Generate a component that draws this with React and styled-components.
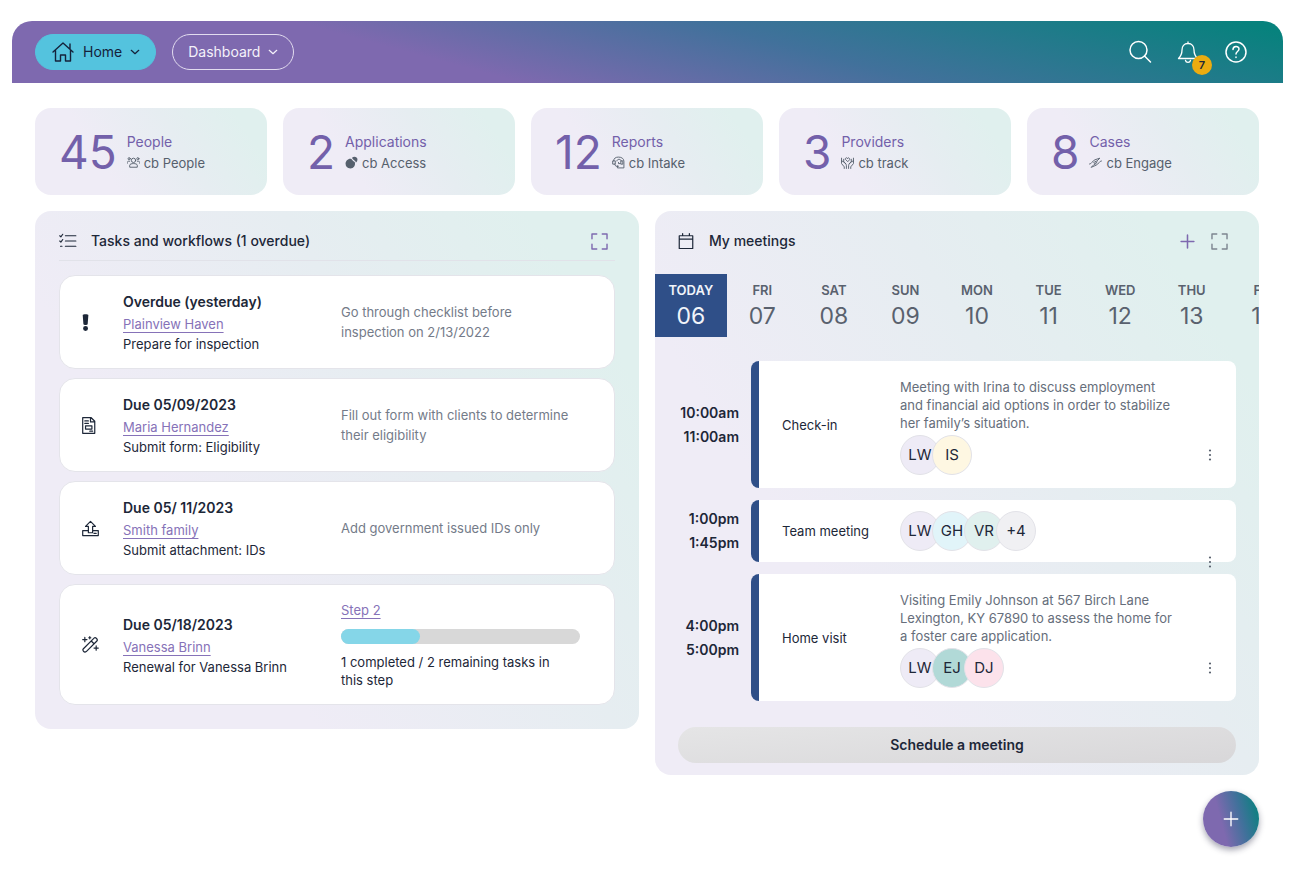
import React from "react";
import styled, { createGlobalStyle } from "styled-components";

const GlobalStyle = createGlobalStyle`
    * {
        box-sizing: border-box;
    }

    body {
        margin: 0;
        background-color: #ffffff;
        color: #1d2738;
        font-family: Inter, "Liberation Sans", sans-serif;
        font-size: 13px;
        line-height: 20px;
    }

    h2, p, ul, ol {
        margin: 0;
        padding: 0;
        list-style: none;
    }

    button {
        border: 0;
        padding: 0;
        background: none;
        color: inherit;
        font: inherit;
        cursor: pointer;
    }
`

const softGradient = "linear-gradient(57deg, #efecf6 30%, #e6edf1 62%, #e0f0ee 88%)";

const Page = styled.div`
    padding: 21px 17px 24px 12px;
`

const TopBar = styled.header`
    display: flex;
    align-items: center;
    gap: 16px;
    height: 62px;
    padding: 0 35px 0 23px;
    border-radius: 20px 20px 0 0;
    background: linear-gradient(15deg, #7e69af 34%, #41719b 61%, #07827d 97%);
    color: #ffffff;
`

const NavButton = styled.button`
    display: flex;
    align-items: center;
    gap: 8px;
    height: 36px;
    padding: 0 15px;
    border: 1px solid ${props => props.$active ? "#54c3de" : "#e2dcef"};
    border-radius: 18px;
    background-color: ${props => props.$active ? "#54c3de" : "transparent"};
    color: ${props => props.$active ? "#15223b" : "#f4f1fa"};
    font-size: 14px;
`

const Actions = styled.div`
    display: flex;
    gap: 24px;
    margin-left: auto;
`

const ActionButton = styled.button`
    position: relative;
    width: 24px;
    height: 24px;
`

const Badge = styled.span`
    position: absolute;
    top: 15px;
    left: 16px;
    width: 20px;
    height: 20px;
    border-radius: 50%;
    background-color: #ecac10;
    color: #1d2738;
    font-size: 11px;
    font-weight: 600;
    text-align: center;
`

const Main = styled.main`
    padding: 25px 24px 0 23px;
`

const Stats = styled.ul`
    display: grid;
    grid-template-columns: repeat(5, 1fr);
    gap: 16px;
    margin-bottom: 16px;
`

const Stat = styled.li`
    display: flex;
    align-items: center;
    gap: 10px;
    height: 87px;
    padding: 0 24px;
    border-radius: 16px;
    background: ${softGradient};
`

const StatNumber = styled.span`
    color: #7360aa;
    font-size: 46px;
    line-height: 48px;
`

const StatLabel = styled.div`
    color: #7360aa;
    font-size: 14px;
    line-height: 22px;
`

const StatApp = styled.div`
    display: flex;
    align-items: center;
    gap: 4px;
    color: #56606d;
`

const Columns = styled.div`
    display: grid;
    grid-template-columns: repeat(2, minmax(0, 1fr));
    align-items: start;
    gap: 16px;
`

const Panel = styled.section`
    padding: ${props => props.$flush ? "0 0 12px" : "0 24px 24px"};
    border-radius: 16px;
    background: ${softGradient};
    overflow: hidden;
`

const PanelHeader = styled.div`
    display: flex;
    align-items: center;
    gap: 14px;
    height: 50px;
    padding: ${props => props.$flush ? "11px 30px 0 22px" : "11px 6px 0 0"};
    border-bottom: 1px solid ${props => props.$flush ? "transparent" : "#e1e2e9"};
    margin-bottom: ${props => props.$flush ? "13px" : "14px"};

    h2 {
        flex: 1;
        font-size: 14px;
        font-weight: 500;
    }
`

const IconButton = styled.button`
    display: flex;
    color: ${props => props.$muted ? "#7d8590" : "#7e69af"};
`

const TaskList = styled.ul`
    display: grid;
    gap: 9px;
`

const Task = styled.li`
    display: grid;
    grid-template-columns: 41px 218px 1fr;
    align-items: center;
    min-height: 94px;
    padding: 14px 34px 14px 22px;
    border: 1px solid #e4e4ea;
    border-radius: 16px;
    background-color: #ffffff;
`

const TaskIcon = styled.span`
    display: flex;
    color: #1d2738;
`

const TaskDate = styled.div`
    font-size: 14px;
    font-weight: 600;
    line-height: 24px;
`

const TextLink = styled.a`
    color: #8672b8;
    text-decoration: underline;
    text-decoration-thickness: 1px;
    text-underline-offset: 3px;
`

const TaskNote = styled.p`
    padding-right: 6px;
    color: #747b89;
`

const TaskStep = styled.div`
    display: grid;
    gap: 9px;
    padding: 1px 0;

    a {
        justify-self: start;
    }

    p {
        padding-right: 12px;
        line-height: 18px;
    }
`

const Progress = styled.div`
    height: 15px;
    border-radius: 8px;
    background-color: #d8d8d8;
`

const ProgressFill = styled.div`
    height: 100%;
    border-radius: 8px;
    background-color: #85d6e8;
`

const Days = styled.ol`
    display: flex;
    overflow: hidden;
    margin-bottom: 24px;

    li {
        flex: 0 0 11.85%;
    }
`

const Day = styled.button`
    width: 100%;
    height: 63px;
    padding-top: 2px;
    background-color: ${props => props.$active ? "#2f4f88" : "transparent"};
    color: ${props => props.$active ? "#f1f4fa" : "#59616e"};
    font-weight: 600;
    line-height: 20px;

    strong {
        display: block;
        font-size: 23px;
        font-weight: 400;
        line-height: 33px;
    }
`

const Meetings = styled.ul`
    display: grid;
    gap: 12px;
    padding: 0 23px;
`

const Meeting = styled.li`
    display: grid;
    grid-template-columns: 61px 1fr;
    gap: 12px;
    align-items: center;
`

const MeetingTime = styled.div`
    font-size: 14px;
    font-weight: 600;
    line-height: 24px;
    text-align: right;
`

const MeetingCard = styled.div`
    position: relative;
    display: grid;
    grid-template-columns: 118px 1fr;
    align-items: center;
    min-height: ${props => props.$tall ? "127px" : "62px"};
    padding: 8px 56px 8px 23px;
    border-left: 8px solid #2f4f88;
    border-radius: 8px;
    background-color: #ffffff;
`

const MeetingNote = styled.p`
    padding: 4px 0 3px;
    color: #666e7b;
    line-height: 18px;
`

const Avatars = styled.div`
    display: flex;
`

const Avatar = styled.span`
    width: 40px;
    height: 40px;
    margin-right: -8px;
    border: 1px solid #e2e2e8;
    border-radius: 50%;
    background-color: ${props => props.$color};
    font-size: 15px;
    line-height: 38px;
    text-align: center;
`

const MenuButton = styled.button`
    position: absolute;
    right: 18px;
    bottom: ${props => props.$hanging ? "-10px" : "23px"};
    display: flex;
    align-items: center;
    justify-content: center;
    width: 16px;
    height: 20px;
    color: #59616e;
`

const ScheduleButton = styled.button`
    display: block;
    width: calc(100% - 46px);
    height: 36px;
    margin: 26px 23px 0;
    border-radius: 18px;
    background: linear-gradient(175deg, #e5e5e6, #d8d7d9);
    font-size: 14px;
    font-weight: 600;
`

const AddButton = styled.button`
    display: flex;
    align-items: center;
    justify-content: center;
    width: 56px;
    height: 56px;
    margin: 16px 0 0 auto;
    border-radius: 50%;
    background: linear-gradient(75deg, #7e69af 35%, #41719b 65%, #07827d 95%);
    box-shadow: 0 3px 6px rgba(30, 30, 60, 0.4);
    color: #ffffff;
`

const drawings = {
    home: <path d="M2 12 12 3l10 9M4.500 10v11h5v-6h5v6h5V10M19 9V4" />,
    chevron: <path d="m3 8 9 8 9-8" />,
    search: <><circle cx="10.500" cy="10" r="8.500" /><path d="m16.500 16 6 6" /></>,
    bell: <path d="M12 2v1.500M12 3.500c-4 0-6 3-6 6.500 0 5-1.500 6.500-3.500 8.500h19C19.500 16.500 18 15 18 10c0-3.500-2-6.500-6-6.500ZM9.500 20.500c.5 2.500 4.500 2.500 5 0" />,
    help: <><circle cx="12" cy="12" r="10" /><path d="M9 9.500c0-4 6-4 6-.5 0 2.500-3 2.500-3 5M12 17v.5" /></>,
    people: <>
        <circle cx="12" cy="8" r="4" /><circle cx="4" cy="5" r="2" /><circle cx="20" cy="5" r="2" />
        <path d="M5 20v-3c0-4 14-4 14 0v3ZM0 14c0-5 3-5 5-4M24 14c0-5-3-5-5-4" />
    </>,
    blobs: <g fill="currentColor" stroke="none">
        <path d="M11 5c3 1 3 5 7 6 2 6-2 12-8 12S1 19 1 14s5-10 10-9Z" />
        <path d="M13 3c3-3 10-2 10 3 0 3-1 5-3 6 0-4-5-4-7-9Z" />
    </g>,
    headset: <path d="M3 9C3 4 7 2 12 2c6 0 10 3 10 8v12H10v-4M2 9h4v6H2zM9 9c0-4 8-4 8 0M17 9h3v6h-3zM5 15c0 4 4 5 7 4M12 12v2h3" />,
    hands: <>
        <path d="m12 10-4-4c0-4 4-3 4-1 0-2 4-3 4 1Z" />
        <path d="M1 4v10l5 6v3M1 9c5 1 9 5 9 9v5M5 6v5l3 3M23 4v10l-5 6v3M23 9c-5 1-9 5-9 9v5M19 6v5l-3 3" />
    </>,
    engage: <path d="M1 15c4 0 5-6 10-8l9-3-5 5-5 2c-2 1-1 4 2 2l3-2M23 9c-4 0-5 6-10 8l-9 4 5-5 4-2" />,
    checklist: <path d="M8.500 5h14M8.500 12h14M8.500 19h14M1 5l1.500 1.500L5 3M1 12l1.500 1.500L5 10M2 19h2" />,
    expand: <path d="M2.500 8.500v-6h6M15.500 2.500h6v6M21.500 15.500v6h-6M8.500 21.500h-6v-6" />,
    calendar: <path d="M3 5h18v17H3zM3 9.500h18M7.500 2v3M16.500 2v3" />,
    plus: <path d="M12 3v18M3 12h18" />,
    alert: <path fill="currentColor" stroke="none" d="M1 1.500C1 0 9 0 9 1.500L8 14.500c-.5 1.500-5.500 1.500-6 0ZM8.500 20.500a3.500 3.500 0 1 1-7 0 3.500 3.500 0 0 1 7 0Z" />,
    form: <path d="M1 1h12l5 5v17H1zM12 1v6h6M4 5.500h5M4 9h5M5 12.500h9v4.500H5zM11 20h4" />,
    upload: <path d="M9 18V9H5l7-7 7 7h-4v9H9ZM9 15H1v7h22v-7h-8M17 19h3" />,
    wand: <path d="m2 18 15-15c2-2 6 2 4 4L6 22c-3 2-6-2-4-4ZM13 7l4 4M4 2v6M1 5h6M20 14v6M17 17h6M11 1v3M9.500 2.500h3" />,
    dots: <g fill="currentColor" stroke="none"><circle cx="12" cy="3" r="2.200" /><circle cx="12" cy="12" r="2.200" /><circle cx="12" cy="21" r="2.200" /></g>,
};

function Icon({ name, size = 16, weight = 1.5 }) {
    return (
        <svg width={size} height={size} viewBox="0 0 24 24" fill="none" stroke="currentColor" strokeWidth={weight} strokeLinecap="round" strokeLinejoin="round" aria-hidden="true">
            {drawings[name]}
        </svg>
    )
}

const stats = [
    { count: 45, label: "People", app: "cb People", icon: "people" },
    { count: 2, label: "Applications", app: "cb Access", icon: "blobs" },
    { count: 12, label: "Reports", app: "cb Intake", icon: "headset" },
    { count: 3, label: "Providers", app: "cb track", icon: "hands" },
    { count: 8, label: "Cases", app: "cb Engage", icon: "engage" },
];

const tasks = [
    { icon: "alert", date: "Overdue (yesterday)", who: "Plainview Haven", what: "Prepare for inspection", note: "Go through checklist before inspection on 2/13/2022" },
    { icon: "form", date: "Due 05/09/2023", who: "Maria Hernandez", what: "Submit form: Eligibility", note: "Fill out form with clients to determine their eligibility" },
    { icon: "upload", date: "Due 05/ 11/2023", who: "Smith family", what: "Submit attachment: IDs", note: "Add government issued IDs only" },
    { icon: "wand", date: "Due 05/18/2023", who: "Vanessa Brinn", what: "Renewal for Vanessa Brinn", done: 33 },
];

const days = [
    ["TODAY", "06"], ["FRI", "07"], ["SAT", "08"], ["SUN", "09"], ["MON", "10"],
    ["TUE", "11"], ["WED", "12"], ["THU", "13"], ["FRI", "14"],
];

const lilac = "#eeebf6";

const meetings = [
    {
        start: "10:00am", end: "11:00am", title: "Check-in",
        note: "Meeting with Irina to discuss employment and financial aid options in order to stabilize her family’s situation.",
        people: [["LW", lilac], ["IS", "#fef7e2"]],
    },
    {
        start: "1:00pm", end: "1:45pm", title: "Team meeting",
        people: [["LW", lilac], ["GH", "#e1f4f9"], ["VR", "#e0f0ee"], ["+4", "#f0f0f3"]],
    },
    {
        start: "4:00pm", end: "5:00pm", title: "Home visit",
        note: "Visiting Emily Johnson at 567 Birch Lane Lexington, KY 67890 to assess the home for a foster care application.",
        people: [["LW", lilac], ["EJ", "#b1d9d7"], ["DJ", "#fce2eb"]],
    },
];

function Header() {
    return (
        <TopBar>
            <NavButton type="button" $active><Icon name="home" size={24} weight={1.4} />Home<Icon name="chevron" size={10} weight={3} /></NavButton>
            <NavButton type="button">Dashboard<Icon name="chevron" size={10} weight={3} /></NavButton>
            <Actions>
                <ActionButton type="button" aria-label="Search"><Icon name="search" size={24} /></ActionButton>
                <ActionButton type="button" aria-label="Notifications"><Icon name="bell" size={24} weight={1.3} /><Badge>7</Badge></ActionButton>
                <ActionButton type="button" aria-label="Help"><Icon name="help" size={24} /></ActionButton>
            </Actions>
        </TopBar>
    )
}

function TaskPanel() {
    return (
        <Panel>
            <PanelHeader>
                <Icon name="checklist" size={18} weight={1.5} />
                <h2>Tasks and workflows (1 overdue)</h2>
                <IconButton type="button" aria-label="Expand tasks"><Icon name="expand" size={19} weight={1.8} /></IconButton>
            </PanelHeader>
            <TaskList>
                {tasks.map(task => (
                    <Task key={task.who}>
                        <TaskIcon><Icon name={task.icon} size={17} weight={1.7} /></TaskIcon>
                        <div>
                            <TaskDate>{task.date}</TaskDate>
                            <TextLink href="#">{task.who}</TextLink>
                            <div>{task.what}</div>
                        </div>
                        {task.note && <TaskNote>{task.note}</TaskNote>}
                        {task.done && (
                            <TaskStep>
                                <TextLink href="#">Step 2</TextLink>
                                <Progress role="progressbar" aria-label="Step progress" aria-valuenow={task.done}>
                                    <ProgressFill style={{ width: `${task.done}%` }} />
                                </Progress>
                                <p>1 completed / 2 remaining tasks in this step</p>
                            </TaskStep>
                        )}
                    </Task>
                ))}
            </TaskList>
        </Panel>
    )
}

function MeetingPanel() {
    return (
        <Panel $flush>
            <PanelHeader $flush>
                <Icon name="calendar" size={18} weight={1.6} />
                <h2>My meetings</h2>
                <IconButton type="button" aria-label="Add meeting"><Icon name="plus" size={17} weight={2.2} /></IconButton>
                <IconButton type="button" aria-label="Expand meetings" $muted><Icon name="expand" size={19} weight={1.8} /></IconButton>
            </PanelHeader>
            <Days>
                {days.map(([name, number], i) => (
                    <li key={number}><Day type="button" $active={i === 0}>{name}<strong>{number}</strong></Day></li>
                ))}
            </Days>
            <Meetings>
                {meetings.map(meeting => (
                    <Meeting key={meeting.title}>
                        <MeetingTime>{meeting.start}<br />{meeting.end}</MeetingTime>
                        <MeetingCard $tall={Boolean(meeting.note)}>
                            <div>{meeting.title}</div>
                            <div>
                                {meeting.note && <MeetingNote>{meeting.note}</MeetingNote>}
                                <Avatars>
                                    {meeting.people.map(([name, color]) => <Avatar key={name} $color={color}>{name}</Avatar>)}
                                </Avatars>
                            </div>
                            <MenuButton type="button" aria-label="Meeting options" $hanging={!meeting.note}><Icon name="dots" size={12} /></MenuButton>
                        </MeetingCard>
                    </Meeting>
                ))}
            </Meetings>
            <ScheduleButton type="button">Schedule a meeting</ScheduleButton>
        </Panel>
    )
}

function App() {
    return (
        <>
        <GlobalStyle />
        <Page>
            <Header />
            <Main>
                <Stats>
                    {stats.map(stat => (
                        <Stat key={stat.label}>
                            <StatNumber>{stat.count}</StatNumber>
                            <div>
                                <StatLabel>{stat.label}</StatLabel>
                                <StatApp><Icon name={stat.icon} size={13} weight={1.7} />{stat.app}</StatApp>
                            </div>
                        </Stat>
                    ))}
                </Stats>
                <Columns>
                    <TaskPanel />
                    <MeetingPanel />
                </Columns>
                <AddButton type="button" aria-label="Add"><Icon name="plus" size={18} weight={1.8} /></AddButton>
            </Main>
        </Page>
        </>
    )
}

export default App;
